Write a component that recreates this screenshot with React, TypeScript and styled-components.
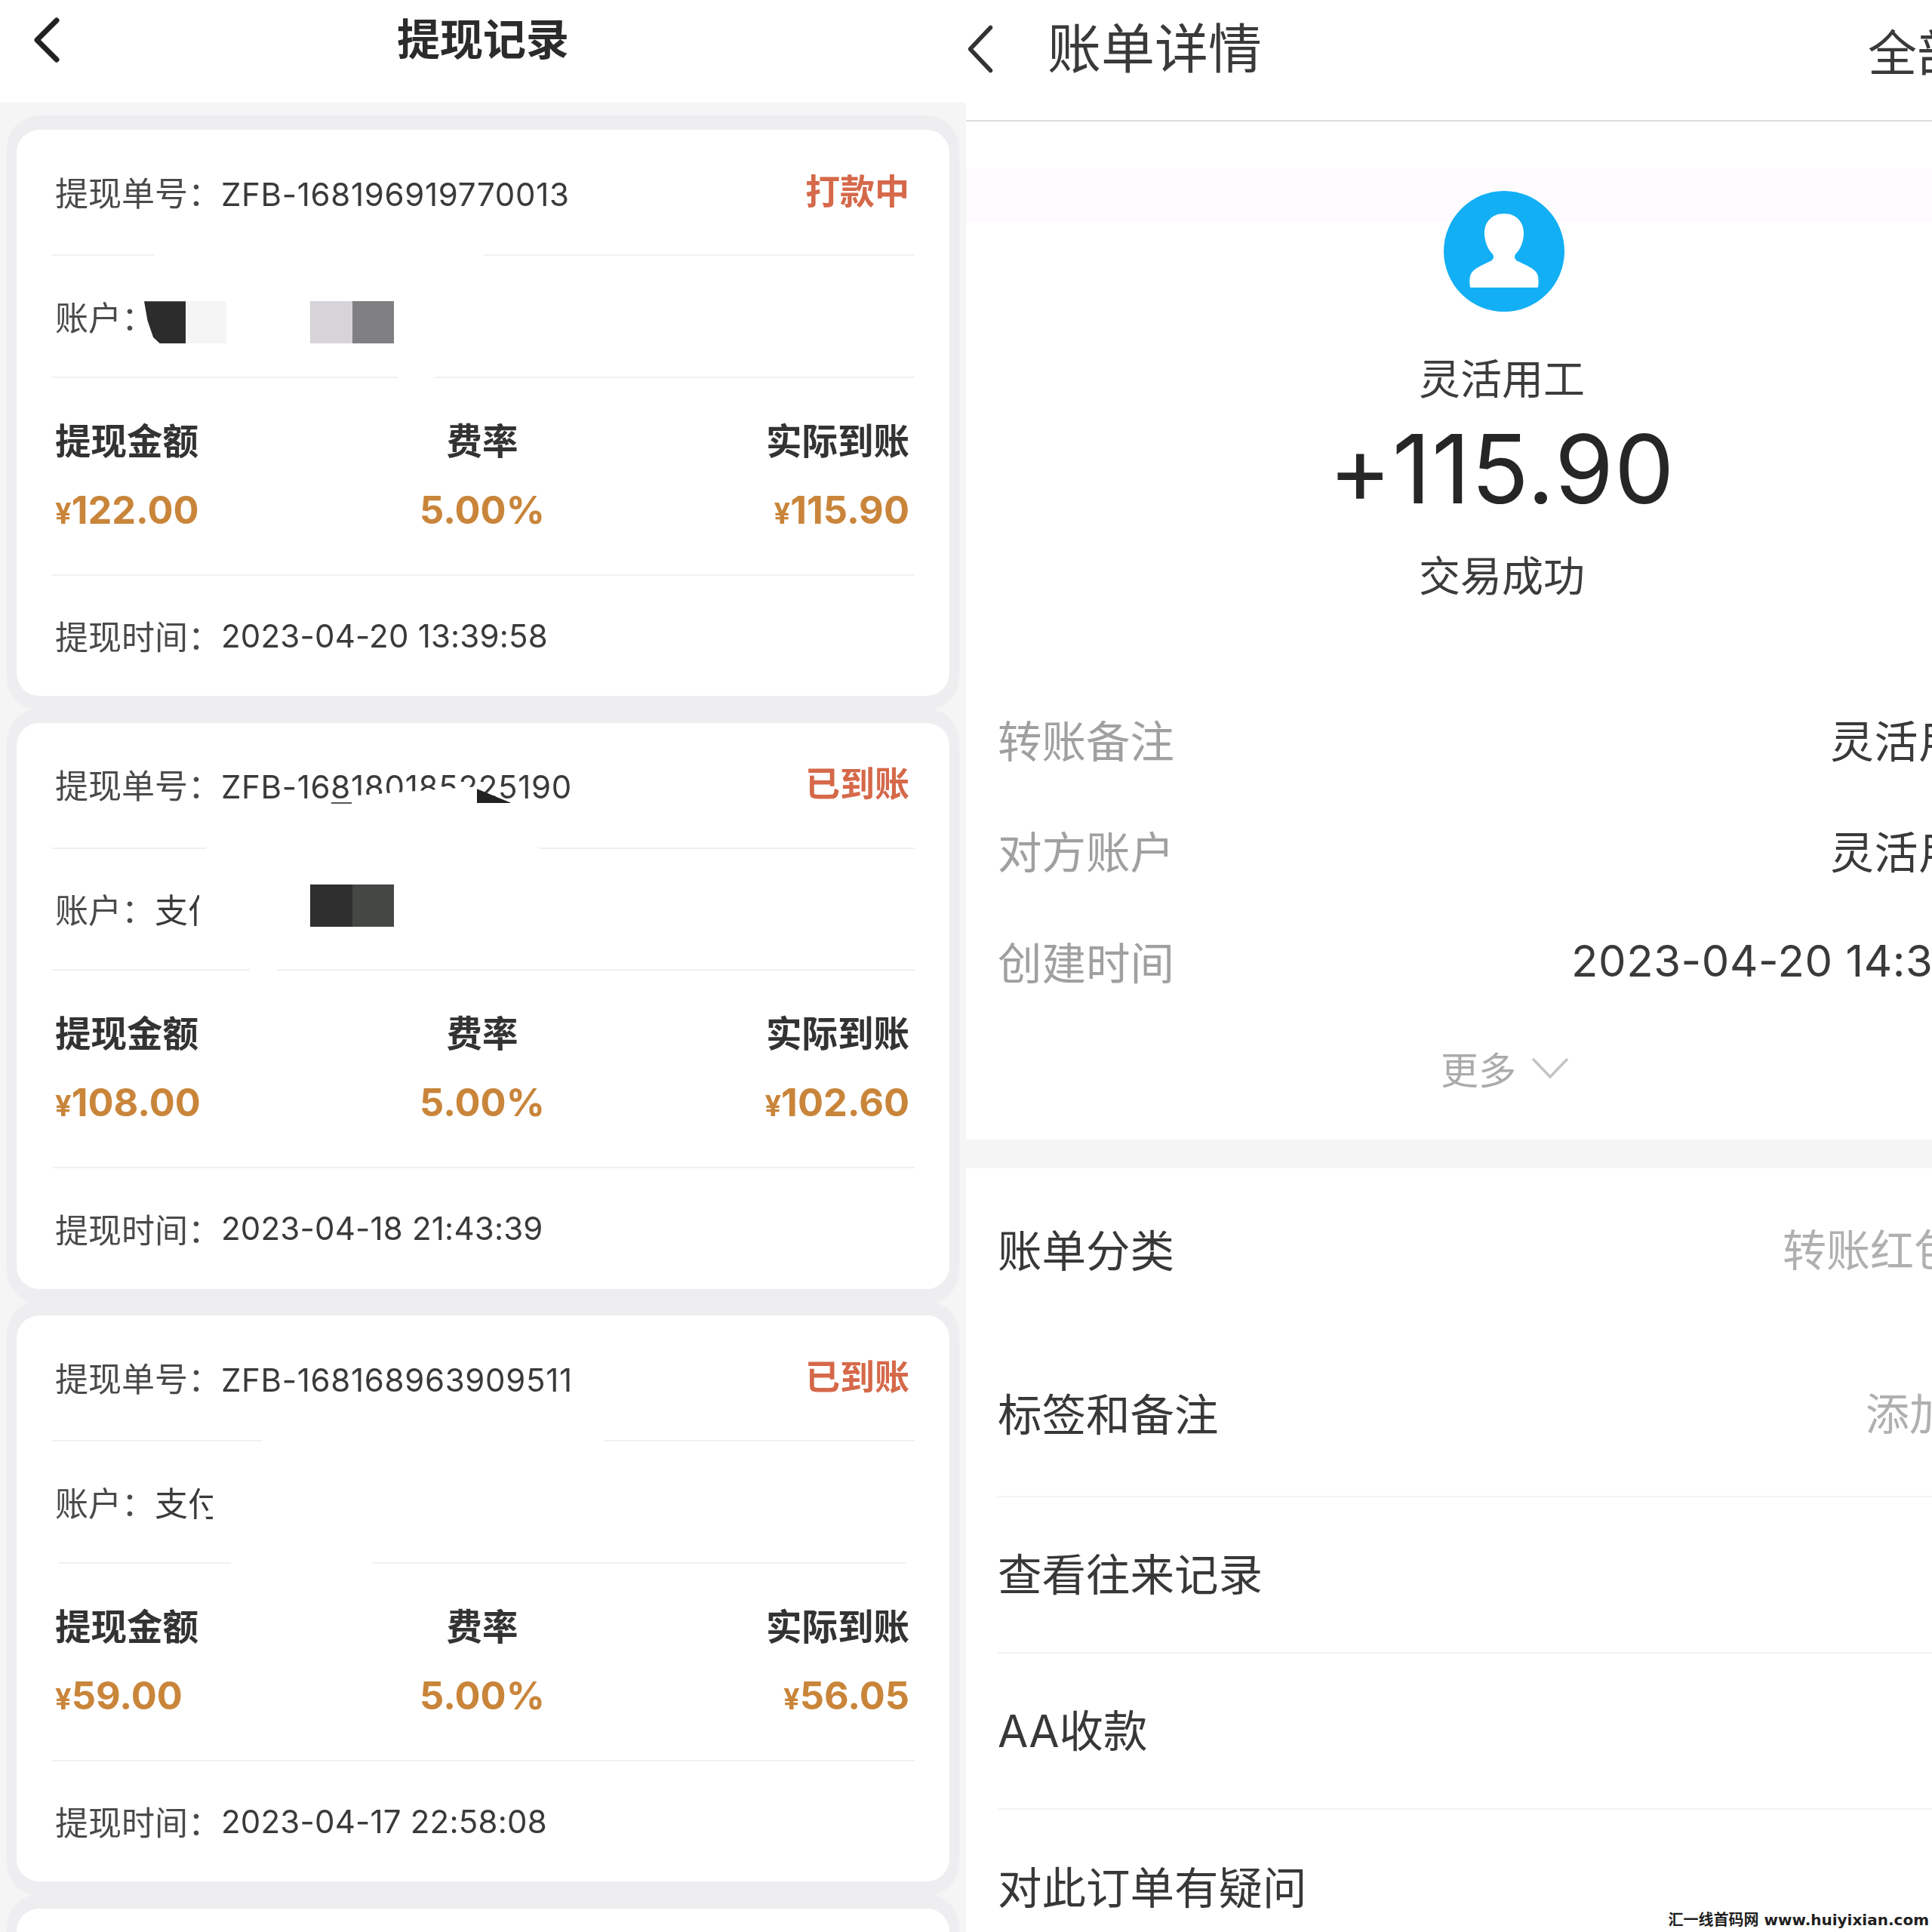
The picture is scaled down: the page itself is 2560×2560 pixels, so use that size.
import React from 'react'
import styled, { createGlobalStyle, css } from 'styled-components'

const GlobalStyle = createGlobalStyle`
  html, body {
    margin: 0;
    padding: 0;
    background: #fff;
  }
  * {
    box-sizing: border-box;
  }
`

const FONT = `Inter, "Noto Sans CJK SC", sans-serif`

const softPhoto = css`
  filter: blur(0.7px);
`

type Segment = { from: number; to: number }

type Redaction = { curve?: boolean; left: number; top: number; width: number; color: string }

type WithdrawRecord = {
  orderNo: string
  status: string
  account: string
  accountClip: number
  redactions: Redaction[]
  amount: string
  actual: string
  time: string
  ruleOne: Segment[]
  ruleTwo: Segment[]
  maskOrder?: boolean
}

const records: WithdrawRecord[] = [
  {
    orderNo: 'ZFB-168196919770013',
    status: '打款中',
    account: '',
    accountClip: 0,
    redactions: [
      { curve: true, left: 169, top: 60, width: 55, color: '#2c2c2c' },
      { left: 224, top: 60, width: 54, color: '#f5f5f5' },
      { left: 389, top: 60, width: 56, color: '#d6d4d8' },
      { left: 445, top: 60, width: 55, color: '#807f82' },
    ],
    amount: '122.00',
    actual: '115.90',
    time: '2023-04-20 13:39:58',
    ruleOne: [
      { from: 47, to: 182 },
      { from: 619, to: 1190 },
    ],
    ruleTwo: [
      { from: 47, to: 505 },
      { from: 555, to: 1190 },
    ],
  },
  {
    orderNo: 'ZFB-168180185225190',
    status: '已到账',
    account: '支付',
    accountClip: 59,
    redactions: [
      { left: 389, top: 47, width: 56, color: '#2f2f2f' },
      { left: 445, top: 47, width: 55, color: '#454745' },
    ],
    amount: '108.00',
    actual: '102.60',
    time: '2023-04-18 21:43:39',
    ruleOne: [
      { from: 47, to: 251 },
      { from: 692, to: 1190 },
    ],
    ruleTwo: [
      { from: 47, to: 309 },
      { from: 345, to: 1190 },
    ],
    maskOrder: true,
  },
  {
    orderNo: 'ZFB-168168963909511',
    status: '已到账',
    account: '支付',
    accountClip: 77,
    redactions: [],
    amount: '59.00',
    actual: '56.05',
    time: '2023-04-17 22:58:08',
    ruleOne: [
      { from: 47, to: 325 },
      { from: 778, to: 1190 },
    ],
    ruleTwo: [
      { from: 56, to: 284 },
      { from: 472, to: 1178 },
    ],
  },
]

const detailRows = [
  { label: '转账备注', value: '灵活用工', gap: 869 },
  { label: '对方账户', value: '灵活用工', gap: 869 },
  { label: '创建时间', value: '2023-04-20 14:39:10', gap: 526 },
]

const BackIcon = ({ width, height, color, stroke }: { width: number; height: number; color: string; stroke: number }) => (
  <svg width={width} height={height} viewBox={`0 0 ${width} ${height}`} fill="none">
    <path
      d={`M${width - stroke} ${stroke}L${stroke} ${height / 2}L${width - stroke} ${height - stroke}`}
      stroke={color}
      strokeWidth={stroke}
      strokeLinecap="round"
      strokeLinejoin="round"
    />
  </svg>
)

const Rule = ({ segments }: { segments: Segment[] }) => (
  <RuleTrack>
    {segments.map((segment) => (
      <RuleSegment key={segment.from} $from={segment.from} $to={segment.to} />
    ))}
  </RuleTrack>
)

const RecordCard = ({ record }: { record: WithdrawRecord }) => (
  <Card>
    <TopRow>
      <OrderText>
        <FieldLabel>提现单号：</FieldLabel>
        <OrderValue>{record.orderNo}</OrderValue>
        {record.maskOrder && (
          <>
            <OrderMask />
            <OrderSmudge />
            <OrderUnderline />
          </>
        )}
      </OrderText>
      <Status>{record.status}</Status>
    </TopRow>
    <Rule segments={record.ruleOne} />
    <AccountRow>
      <FieldLabel>账户：</FieldLabel>
      {record.account && (
        <AccountClip $width={record.accountClip}>
          <AccountName>{record.account}</AccountName>
        </AccountClip>
      )}
      {record.redactions.map((block) => (
        <RedactBlock
          key={block.left}
          $curve={block.curve}
          $left={block.left}
          $top={block.top}
          $width={block.width}
          $color={block.color}
        />
      ))}
    </AccountRow>
    <Rule segments={record.ruleTwo} />
    <AmountRow>
      <AmountColumn $align="flex-start">
        <AmountLabel>提现金额</AmountLabel>
        <AmountValue>
          <Yen>¥</Yen>
          {record.amount}
        </AmountValue>
      </AmountColumn>
      <AmountColumn $align="center">
        <AmountLabel>费率</AmountLabel>
        <AmountValue>5.00%</AmountValue>
      </AmountColumn>
      <AmountColumn $align="flex-end">
        <AmountLabel>实际到账</AmountLabel>
        <AmountValue>
          <Yen>¥</Yen>
          {record.actual}
        </AmountValue>
      </AmountColumn>
    </AmountRow>
    <Rule segments={[{ from: 47, to: 1190 }]} />
    <TimeRow>
      <FieldLabel>提现时间：</FieldLabel>
      <TimeValue>{record.time}</TimeValue>
    </TimeRow>
  </Card>
)

export default function App() {
  return (
    <>
      <GlobalStyle />
      <Screen>
        <RecordsPanel>
          <RecordsHeader>
            <RecordsBack>
              <BackIcon width={40} height={66} color="#222" stroke={7} />
            </RecordsBack>
            <RecordsTitle>提现记录</RecordsTitle>
          </RecordsHeader>
          <CardList>
            {records.map((record) => (
              <RecordCard key={record.orderNo} record={record} />
            ))}
            <Card />
          </CardList>
        </RecordsPanel>

        <BillPanel>
          <BillSheet>
            <BillHeader>
              <BillBack>
                <BackIcon width={38} height={68} color="#333" stroke={5.5} />
              </BillBack>
              <BillTitle>账单详情</BillTitle>
              <AllLink>全部账单</AllLink>
            </BillHeader>
            <Hero>
              <Avatar>
                <svg width="160" height="160" viewBox="0 0 160 160">
                  <circle cx="80" cy="80" r="80" fill="#12aff5" />
                  <path
                    d="M80 30c-16 0-26 11-26 26 0 12 5 22 11 28 2 3 1 7-3 9-10 5-22 9-26 17-2 5-2 12-1 17 0 1 1 1 2 1h86c1 0 2 0 2-1 1-5 1-12-1-17-4-8-16-12-26-17-4-2-5-6-3-9 6-6 11-16 11-28 0-15-10-26-26-26z"
                    fill="#fff"
                  />
                </svg>
              </Avatar>
              <PayeeName>灵活用工</PayeeName>
              <BigAmount>+115.90</BigAmount>
              <TradeState>交易成功</TradeState>
            </Hero>
            <DetailList>
              {detailRows.map((row) => (
                <DetailRow key={row.label}>
                  <DetailLabel>{row.label}</DetailLabel>
                  <DetailValue $gap={row.gap}>{row.value}</DetailValue>
                </DetailRow>
              ))}
              <MoreRow>
                <MoreText>更多</MoreText>
                <svg width="50" height="30" viewBox="0 0 50 30" fill="none">
                  <path d="M2 3l23 24L48 3" stroke="#c4c4c4" strokeWidth="3.5" />
                </svg>
              </MoreRow>
            </DetailList>
            <GapBand />
            <ActionList>
              <CategoryRow>
                <ActionLabel>账单分类</ActionLabel>
                <ActionHint $start={1082}>转账红包</ActionHint>
              </CategoryRow>
              <TagRow>
                <ActionLabel>标签和备注</ActionLabel>
                <ActionHint $start={1192}>添加</ActionHint>
              </TagRow>
              <ActionRow>
                <ActionLabel>查看往来记录</ActionLabel>
              </ActionRow>
              <ActionRow>
                <ActionLabel>AA收款</ActionLabel>
              </ActionRow>
              <LastRow>
                <ActionLabel>对此订单有疑问</ActionLabel>
              </LastRow>
            </ActionList>
          </BillSheet>
        </BillPanel>
        <Watermark>汇一线首码网 www.huiyixian.com</Watermark>
      </Screen>
    </>
  )
}

const Screen = styled.div`
  position: relative;
  display: grid;
  grid-template-columns: 1280px 1280px;
  width: 2560px;
  height: 2560px;
  overflow: hidden;
  font-family: ${FONT};
  background: #fff;
`

const RecordsPanel = styled.div`
  display: flex;
  flex-direction: column;
  height: 2560px;
  overflow: hidden;
  background: #f6f5f6;
  ${softPhoto}
`

const RecordsHeader = styled.div`
  position: relative;
  display: flex;
  align-items: center;
  justify-content: center;
  flex: none;
  height: 136px;
  padding-bottom: 40px;
  background: #fff;
`

const RecordsBack = styled.div`
  position: absolute;
  left: 42px;
  top: 20px;
  line-height: 0;
`

const RecordsTitle = styled.div`
  font-size: 57px;
  font-weight: 700;
  color: #2b2b2b;
`

const CardList = styled.div`
  display: flex;
  flex-direction: column;
  gap: 35.5px;
  padding: 36px 22px 0;
`

const Card = styled.div`
  display: flex;
  flex: none;
  flex-direction: column;
  height: 750px;
  border-radius: 30px;
  background: #fff;
  box-shadow: 0 -6px 2px 13px #eeedef, 0 6px 2px 13px #eeedef;
`

const TopRow = styled.div`
  display: flex;
  align-items: center;
  justify-content: space-between;
  height: 166px;
  padding: 0 53px 0 51px;
`

const OrderText = styled.div`
  position: relative;
  margin-top: 14px;
  line-height: 60px;
  white-space: nowrap;
`

const FieldLabel = styled.span`
  font-size: 44px;
  color: #4a4a4a;
`

const FieldValue = styled.span`
  font-size: 42px;
  color: #3a3a3a;
`

const OrderValue = styled(FieldValue)`
  letter-spacing: 0.7px;
`

const TimeValue = styled(FieldValue)`
  letter-spacing: 0.2px;
`

const AccountName = styled.span`
  font-size: 44px;
  color: #3a3a3a;
`

const OrderMask = styled.div`
  position: absolute;
  left: 396px;
  top: 27px;
  width: 163px;
  height: 30px;
  background: #fff;
  clip-path: polygon(0 50%, 100% 10%, 100% 100%, 0 100%);
`

const OrderSmudge = styled.div`
  position: absolute;
  left: 559px;
  top: 33px;
  width: 46px;
  height: 19px;
  background: #222;
  clip-path: polygon(0 0, 100% 100%, 0 100%);
`

const OrderUnderline = styled.div`
  position: absolute;
  left: 366px;
  top: 51px;
  width: 27px;
  height: 2px;
  background: #555;
`

const Status = styled.div`
  padding-bottom: 10px;
  font-size: 46px;
  font-weight: 700;
  color: #d5694a;
`

const RuleTrack = styled.div`
  position: relative;
  flex: none;
  height: 2px;
`

const RuleSegment = styled.div<{ $from: number; $to: number }>`
  position: absolute;
  top: 0;
  left: ${({ $from }) => $from}px;
  width: ${({ $from, $to }) => $to - $from}px;
  height: 2px;
  background: #f0f0f0;
`

const AccountRow = styled.div`
  position: relative;
  display: flex;
  align-items: center;
  height: 160px;
  padding: 0 51px;
`

const AccountClip = styled.div<{ $width: number }>`
  flex: none;
  width: ${({ $width }) => $width}px;
  overflow: hidden;
  white-space: nowrap;
`

const RedactBlock = styled.div<{ $curve?: boolean; $left: number; $top: number; $width: number; $color: string }>`
  position: absolute;
  top: ${({ $top }) => $top}px;
  left: ${({ $left }) => $left}px;
  width: ${({ $width }) => $width}px;
  height: 56px;
  background: ${({ $color }) => $color};
  ${({ $curve }) => $curve && 'clip-path: polygon(0 0, 100% 0, 100% 100%, 38% 100%, 22% 85%, 8% 45%);'}
`

const AmountRow = styled.div`
  display: flex;
  align-items: flex-start;
  justify-content: space-between;
  height: 261px;
  padding: 53px 53px 0 51px;
`

const AmountColumn = styled.div<{ $align: string }>`
  display: flex;
  flex: 1;
  flex-direction: column;
  align-items: ${({ $align }) => $align};
  gap: 27px;
`

const AmountLabel = styled.div`
  font-size: 47.5px;
  line-height: 62px;
  font-weight: 700;
  color: #333;
`

const AmountValue = styled.div`
  font-size: 50.5px;
  line-height: 66px;
  font-weight: 700;
  color: #c9853a;
`

const Yen = styled.span`
  font-size: 38px;
  font-weight: 700;
`

const TimeRow = styled.div`
  display: flex;
  align-items: center;
  height: 160px;
  padding: 0 51px;
  white-space: nowrap;
`

const BillPanel = styled.div`
  width: 1280px;
  height: 2560px;
  overflow: hidden;
  background: #fff;
  ${softPhoto}
`

const BillSheet = styled.div`
  display: flex;
  flex-direction: column;
  width: 1420px;
  height: 2560px;
`

const BillHeader = styled.div`
  display: flex;
  flex: none;
  align-items: center;
  height: 161px;
  padding-bottom: 42px;
  border-bottom: 2px solid #dddddd;
  white-space: nowrap;
`

const BillBack = styled.div`
  flex: none;
  margin-top: 12px;
  line-height: 0;
`

const BillTitle = styled.div`
  margin-left: 70px;
  font-size: 71px;
  color: #3a3a3a;
`

const AllLink = styled.div`
  margin-top: 14px;
  margin-left: 803px;
  font-size: 65px;
  color: #3a3a3a;
`

const Hero = styled.div`
  display: flex;
  flex: none;
  flex-direction: column;
  align-items: center;
  height: 746px;
  padding-top: 92px;
  background: linear-gradient(#fff 62px, #fefbfe 62px, #fefbfe 133px, #fff 133px);
`

const Avatar = styled.div`
  height: 160px;
  margin-bottom: 57px;
  margin-left: 5px;
  line-height: 0;
`

const PayeeName = styled.div`
  font-size: 55px;
  line-height: 64px;
  color: #3c3c3c;
`

const TradeState = styled(PayeeName)`
  margin-top: 35px;
`

const BigAmount = styled.div`
  margin-top: 12px;
  font-size: 126px;
  line-height: 150px;
  letter-spacing: 1px;
  color: #262626;
`

const DetailList = styled.div`
  display: flex;
  flex: none;
  flex-direction: column;
  height: 603px;
`

const DetailRow = styled.div`
  display: flex;
  align-items: center;
  height: 147px;
  padding-left: 42px;
  padding-bottom: 4px;
  white-space: nowrap;
`

const DetailLabel = styled.div`
  flex: none;
  width: 234px;
  font-size: 58.5px;
  color: #a0a0a0;
`

const DetailValue = styled.div<{ $gap: number }>`
  margin-left: ${({ $gap }) => $gap}px;
  font-size: 58px;
  letter-spacing: 0.6px;
  color: #3a3a3a;
`

const MoreRow = styled.div`
  display: flex;
  align-items: center;
  justify-content: center;
  gap: 20px;
  height: 134px;
  padding-left: 8px;
`

const MoreText = styled.div`
  font-size: 50px;
  color: #ababab;
`

const GapBand = styled.div`
  flex: none;
  height: 38px;
  background: #f5f5f5;
`

const ActionList = styled.div`
  display: flex;
  flex-direction: column;
`

const ActionRow = styled.div`
  display: flex;
  flex: none;
  align-items: center;
  height: 207px;
  margin-left: 42px;
  padding-bottom: 8px;
  border-bottom: 2px solid #f4f4f4;
  white-space: nowrap;
`

const CategoryRow = styled(ActionRow)`
  height: 218px;
  border-bottom: none;
`

const TagRow = styled(ActionRow)`
  height: 218px;
`

const LastRow = styled(ActionRow)`
  border-bottom: none;
`

const ActionLabel = styled.div`
  flex: none;
  font-size: 58.5px;
  color: #383838;
`

const ActionHint = styled.div<{ $start: number }>`
  margin-left: auto;
  width: ${({ $start }) => 1420 - $start}px;
  font-size: 58px;
  color: #b0b0b0;
`

const Watermark = styled.div`
  position: absolute;
  right: 4px;
  bottom: 3px;
  font-family: "DejaVu Sans", "Noto Sans CJK SC", sans-serif;
  font-size: 20px;
  font-weight: 700;
  color: #1f1f1f;
  white-space: nowrap;
`
